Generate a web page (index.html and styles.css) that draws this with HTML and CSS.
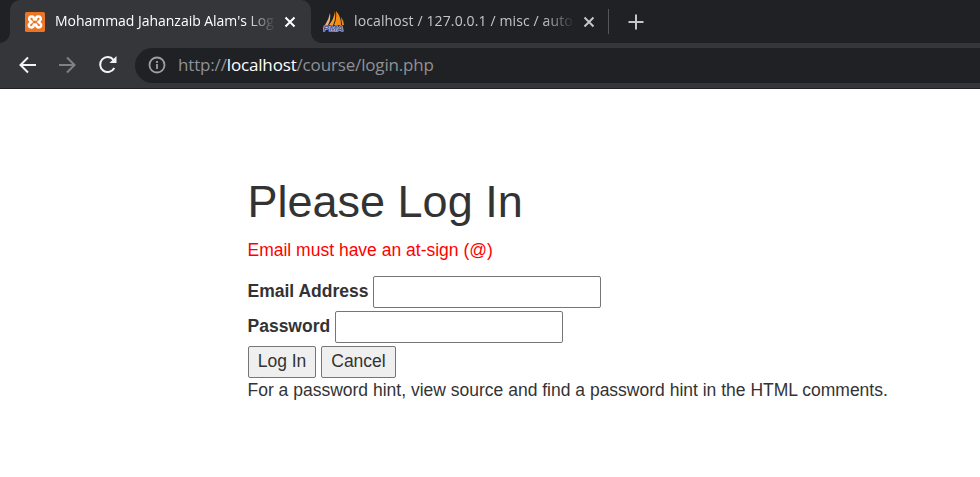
FILE: index.html
```html
<!DOCTYPE html>
<html lang="en">
<head>
<meta charset="utf-8">
<title>Login Page</title>
<link rel="stylesheet" href="styles.css">
</head>
<body>
<header class="browser">
  <div class="tabs">
    <div class="tab active">
      <svg class="favicon" width="20" height="20" viewBox="0 0 20 20">
        <rect width="20" height="20" rx="1.5" fill="#ed7423"/>
        <path d="M7.200 4.800H6.200a2.200 2.200 0 0 0-1 3.900L6.800 10 5 11.200a2.200 2.200 0 0 0 1.200 4c1.700 0 2.600-1 2.800-2.800h2c.2 1.800 1.100 2.800 2.800 2.800a2.200 2.200 0 0 0 1.200-4L13.200 10l1.600-1.300a2.200 2.200 0 0 0-1-3.900h-1c-1.200 0-1.800 1-1.800 2.700H9C9 5.800 8.400 4.800 7.200 4.800z" fill="none" stroke="#fff" stroke-width="2.400" stroke-linejoin="round" transform="translate(-.4 -.4) scale(1.040)"/>
      </svg>
      <span class="tab-title title-login">Mohammad Jahanzaib Alam's Log</span>
      <svg class="close" width="12" height="12" viewBox="0 0 12 12"><path d="M1.5 1.5l9 9M10.5 1.5l-9 9"/></svg>
    </div>
    <div class="tab inactive">
      <svg class="favicon" width="22" height="22" viewBox="0 0 22 22">
        <path d="M7 2Q8 9 5 14H2Q6 8 7 2z" fill="#e8b184"/>
        <path d="M12 0Q13 8 10 14H6Q11 8 12 0z" fill="#f89c26"/>
        <path d="M13 0Q18 5 18 14h-7Q14 8 13 0z" fill="#f78c12"/>
        <path d="M18 6q3 4 3 8h-2z" fill="#df8a37"/>
        <text class="pma" x="0" y="20" textLength="20.500" lengthAdjust="spacingAndGlyphs">PMA</text>
      </svg>
      <span class="tab-title title-db">localhost / 127.0.0.1 / misc / auto</span>
      <svg class="close" width="12" height="12" viewBox="0 0 12 12"><path d="M1.500 1.500l9 9M10.500 1.500l-9 9"/></svg>
    </div>
    <div class="divider"></div>
    <svg class="plus" width="16" height="16" viewBox="0 0 16 16"><path d="M8 .5v15M.5 8h15"/></svg>
  </div>
  <div class="toolbar">
    <svg class="nav back" width="18" height="18" viewBox="0 0 18 18"><path d="M17 9H2M9 1.500L1.500 9 9 16.500"/></svg>
    <svg class="nav forward" width="18" height="18" viewBox="0 0 18 18"><path d="M1 9h15M9 1.500L16.500 9 9 16.500"/></svg>
    <svg class="nav reload" width="20" height="20" viewBox="0 0 20 20"><path d="M16.300 13A7.500 7.500 0 1 1 15.500 4.800"/><path class="arrowhead" d="M18.500 1v7h-7z"/></svg>
    <div class="address">
      <svg class="info" width="18" height="18" viewBox="0 0 18 18"><circle cx="9" cy="9" r="7.500"/><path d="M9 8v5M9 5v2"/></svg>
      <span class="url">http://<span class="host">localhost</span>/course/login.php</span>
    </div>
  </div>
</header>
<main class="container">
  <h1>Please Log In</h1>
  <p class="error">Email must have an at-sign (@)</p>
  <form>
    <div class="row"><label for="email">Email Address</label><input type="text" id="email"></div>
    <div class="row"><label for="pass">Password</label><input type="password" id="pass"></div>
    <div class="row buttons"><button class="login" type="button">Log In</button><button class="cancel" type="button">Cancel</button></div>
  </form>
  <p class="hint">For a password hint, view source and find a password hint in the HTML comments.</p>
</main>
</body>
</html>
```
FILE: styles.css
```css
* { box-sizing: border-box; }
body {
  margin: 0;
  height: 477px;
  overflow: hidden;
  background: #fff;
  color: #333;
  font: 17.5px/25px "Liberation Sans", Arial, sans-serif;
}
svg { display: block; flex: none; }
.browser { font-family: "Open Sans", "Noto Sans", sans-serif; }
.tabs {
  display: flex;
  align-items: center;
  height: 43px;
  background: #202124;
}
.tab { display: flex; align-items: center; height: 43px; }
.tab.active {
  position: relative;
  width: 301px;
  margin-left: 10px;
  padding-left: 15px;
  border-radius: 10px 10px 0 0;
  background: #35363a;
}
.tab.active::before, .tab.active::after {
  content: "";
  position: absolute;
  bottom: 0;
  width: 10px;
  height: 10px;
}
.tab.active::before {
  left: -10px;
  background: radial-gradient(circle at 0 0, transparent 9.5px, #35363a 10px);
}
.tab.active::after {
  right: -10px;
  background: radial-gradient(circle at 100% 0, transparent 9.5px, #35363a 10px);
}
.tab.inactive { width: 297px; padding-left: 12px; }
.pma {
  font: italic 700 8px "Liberation Sans", Arial, sans-serif;
  fill: #55558c;
  stroke: #c6c4e4;
  stroke-width: 1.2px;
  paint-order: stroke;
}
.tab-title {
  width: 219px;
  flex: none;
  white-space: nowrap;
  font-size: 14px;
  line-height: 20px;
  padding-bottom: 2px;
  -webkit-mask-image: linear-gradient(90deg, #000 190px, transparent 221px);
  mask-image: linear-gradient(90deg, #000 190px, transparent 221px);
}
.title-login { margin-left: 10px; color: #fff; letter-spacing: -.03px; }
.title-db { margin-left: 9px; color: #c2c5c9; letter-spacing: .12px; }
.close { margin-left: 10px; fill: none; stroke: #fff; stroke-width: 2; }
.inactive .close { stroke: #c2c5c9; }
.divider { width: 1px; height: 25px; background: #54565a; }
.plus { margin-left: 19px; fill: none; stroke: #c5c7ca; stroke-width: 2; }
.toolbar {
  display: flex;
  align-items: center;
  height: 46px;
  padding-bottom: 1px;
  border-bottom: 1px solid #202124;
  background: #35363a;
}
.nav { fill: none; stroke: #f1f3f4; stroke-width: 2; }
.back { margin-left: 19px; }
.forward { margin-left: 21px; stroke: #808185; }
.reload { margin-left: 22px; }
.arrowhead { fill: #f1f3f4; stroke: none; }
.address {
  display: flex;
  align-items: center;
  flex: 1;
  height: 35px;
  margin-left: 17px;
  padding-left: 13px;
  border-radius: 18px 0 0 18px;
  background: #202124;
}
.info { fill: none; stroke: #9aa0a6; stroke-width: 1.8; }
.url {
  margin-left: 12px;
  color: #8e9196;
  font-size: 17px;
  line-height: 26px;
  letter-spacing: -.16px;
  white-space: nowrap;
}
.host { color: #fff; }
.container { padding: 88px 0 0 247.5px; }
h1 { margin: 0 0 11.5px; font-size: 45px; line-height: 49.5px; font-weight: 400; }
p { margin: 0; white-space: nowrap; }
.error { margin-bottom: 13px; color: #f00; }
.row { display: flex; align-items: center; gap: 4.5px; height: 32px; margin-bottom: 3px; }
.buttons { gap: 5px; margin: 0 0 0 .5px; }
label { font-weight: 700; line-height: 30px; padding-bottom: 2px; white-space: nowrap; }
input {
  width: 228px;
  height: 32px;
  margin: 0;
  border: 1px solid #767676;
  border-radius: 2px;
  background: #fff;
  font: inherit;
}
button {
  height: 32px;
  margin: 0;
  padding: 0 0 2px;
  border: 1px solid #767676;
  border-radius: 2px;
  background: #efefef;
  color: #333;
  font: inherit;
}
.login { width: 68px; }
.cancel { width: 75px; }
```
